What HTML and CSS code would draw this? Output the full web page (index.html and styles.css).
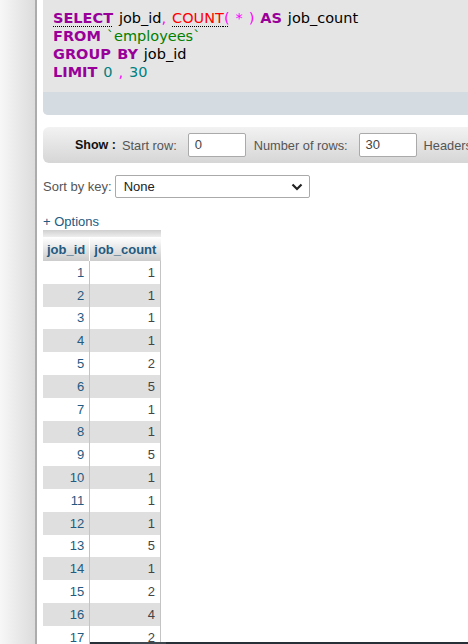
FILE: index.html
```html
<!DOCTYPE html>
<html>
<head>
<meta charset="utf-8">
<link rel="stylesheet" href="styles.css">
</head>
<body>
<div class="page">
  <aside class="side"></aside>
  <main class="main">
    <div class="sqlbox">
      <div class="sql"><div><span class="kw doc">SELECT</span> job_id<span class="pn">,</span> <span class="fn doc">COUNT<span class="pn">(</span></span> <span class="pn">*</span> <span class="pn">)</span> <span class="kw">AS</span> job_count</div><div><span class="kw">FROM</span> <span class="str">`employees`</span></div><div><span class="kw">GROUP BY</span> job_id</div><div><span class="kw">LIMIT</span> <span class="num">0</span> <span class="pn">,</span> <span class="num">30</span></div></div>
      <div class="sqlbar"></div>
    </div>

    <div class="toolbar">
      <span class="show">Show :</span>
      <span class="lbl">Start row:</span>
      <span class="inp inp-start">0</span>
      <span class="lbl">Number of rows:</span>
      <span class="inp inp-rows">30</span>
      <span class="lbl">Headers every:</span>
    </div>

    <div class="sortrow">
      <span class="lbl">Sort by key:</span>
      <div class="select">
        <span>None</span>
        <svg class="chev" width="12" height="8" viewBox="0 0 12 8"><path d="M1.5 1.5 L6 6 L10.5 1.5" fill="none" stroke="#222" stroke-width="2.2"/></svg>
      </div>
    </div>

    <div class="options">+ Options</div>

    <div class="tablewrap">
      <div class="headband"></div>
      <table class="data">
        <thead><tr><th>job_id</th><th>job_count</th></tr></thead>
        <tbody>
          <tr><td>1</td><td>1</td></tr>
          <tr><td>2</td><td>1</td></tr>
          <tr><td>3</td><td>1</td></tr>
          <tr><td>4</td><td>1</td></tr>
          <tr><td>5</td><td>2</td></tr>
          <tr><td>6</td><td>5</td></tr>
          <tr><td>7</td><td>1</td></tr>
          <tr><td>8</td><td>1</td></tr>
          <tr><td>9</td><td>5</td></tr>
          <tr><td>10</td><td>1</td></tr>
          <tr><td>11</td><td>1</td></tr>
          <tr><td>12</td><td>1</td></tr>
          <tr><td>13</td><td>5</td></tr>
          <tr><td>14</td><td>1</td></tr>
          <tr><td>15</td><td>2</td></tr>
          <tr><td>16</td><td>4</td></tr>
          <tr><td>17</td><td>2</td></tr>
          <tr><td>18</td><td>1</td></tr>
        </tbody>
      </table>
    </div>
  </main>
</div>
<div class="bottombar"><span class="thumb"></span></div>
</body>
</html>
```
FILE: styles.css
```css
html, body {
  margin: 0;
  padding: 0;
  height: 644px;
  overflow: hidden;
  background: #fff;
  font-family: "Liberation Sans", Arial, sans-serif;
  font-size: 13px;
  color: #444;
}

.page {
  display: flex;
  height: 644px;
}

.side {
  flex: 0 0 35px;
  background: linear-gradient(to right, #f7f7f7, #dcdcdc);
  border-right: 2px solid #acacac;
}

.main {
  flex: 1;
  min-width: 0;
  overflow: hidden;
  padding-left: 6px;
}

.sqlbox {
  width: 640px;
  background: #e5e5e5;
  border-bottom-left-radius: 5px;
  overflow: hidden;
}

.sql {
  padding: 9px 0 11px 10px;
  font-family: "DejaVu Sans", Verdana, sans-serif;
  font-size: 14.5px;
  line-height: 18px;
  word-spacing: 1.3px;
  color: #000;
  white-space: pre;
}

.kw { color: #990099; font-weight: bold; }
.fn { color: #ff0000; }
.pn { color: #ff00ff; }
.str { color: #008000; }
.num { color: #008080; }
.doc {
  text-decoration: underline dotted #000;
  text-decoration-thickness: 1px;
  text-underline-offset: 3px;
}

.sqlbar {
  height: 23px;
  background: #d4dbe1;
}

.toolbar {
  margin-top: 12px;
  width: 640px;
  height: 36px;
  box-sizing: border-box;
  display: flex;
  align-items: center;
  padding-left: 32px;
  font-size: 12.8px;
  background: linear-gradient(#f2f2f2, #d6d6d6);
  border-radius: 6px 0 0 6px;
  white-space: nowrap;
}

.show {
  font-weight: bold;
  font-size: 12.5px;
  color: #111;
  margin-right: 6px;
}

.lbl { color: #555; }

.inp {
  box-sizing: border-box;
  width: 58px;
  height: 24px;
  line-height: 22px;
  padding-left: 6px;
  background: #fff;
  border: 1px solid #aaa;
  border-radius: 2px;
  color: #444;
  font-size: 13px;
}
.inp-start { margin: 0 8px 0 11px; }
.inp-rows { margin: 0 7px 0 11px; }

.sortrow {
  margin-top: 12px;
  display: flex;
  align-items: center;
  height: 23px;
}

.select {
  position: relative;
  box-sizing: border-box;
  margin-left: 3px;
  width: 195px;
  height: 23px;
  line-height: 21px;
  padding-left: 8px;
  border: 1px solid #aaa;
  border-radius: 2px;
  background: #fff;
  color: #222;
}

.chev {
  position: absolute;
  right: 6px;
  top: 7px;
}

.options {
  margin-top: 15px;
  height: 17px;
  line-height: 18px;
  color: #235a81;
}

.tablewrap {
  width: 118px;
}

.headband {
  height: 7px;
  background: linear-gradient(#cfcfcf, #eeeeee);
}

table.data {
  border-collapse: collapse;
  width: 118px;
}

.data th {
  height: 24px;
  padding: 0 4px;
  background: linear-gradient(#ffffff, #cccccc);
  color: #235a81;
  font-weight: bold;
  text-align: left;
  border-left: 1px solid #fff;
  white-space: nowrap;
}
.data th:first-child { border-left: 0; width: 38px; }

.data td {
  height: 22.8px;
  box-sizing: border-box;
  padding: 0 5px 0 4px;
  text-align: right;
  color: #444;
  border-right: 1px solid #c4c4c4;
}
.data td:first-child { color: #235a81; }

.data tbody tr:nth-child(even) td { background: #dfdfdf; }

.bottombar {
  position: fixed;
  left: 90px;
  right: 0;
  bottom: 0;
  height: 2px;
  background: #263036;
}
.bottombar .thumb {
  display: block;
  margin-left: 40px;
  width: 36px;
  height: 2px;
  background: #3f484e;
}
```
